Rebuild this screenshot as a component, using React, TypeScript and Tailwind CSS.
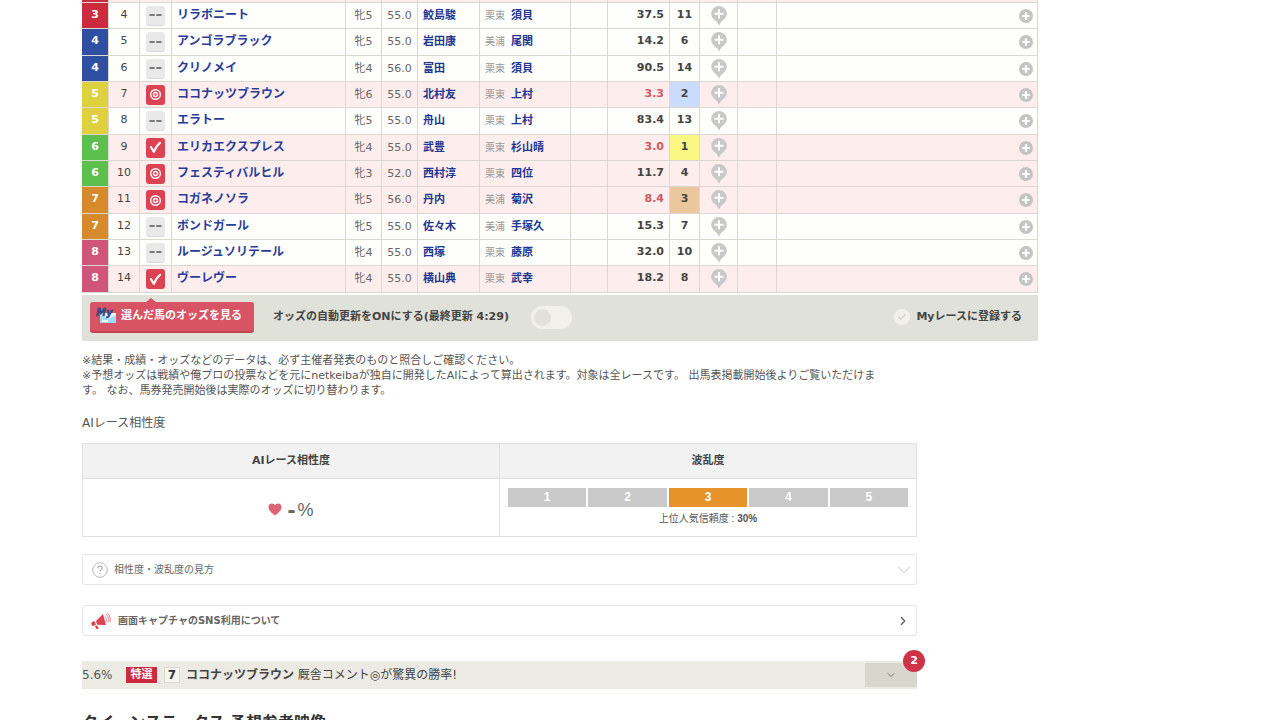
import { useState } from 'react';
import { clsx } from 'clsx';
import { Check, ChevronDown, ChevronRight } from 'lucide-react';

type Mark = 'none' | 'double' | 'check';

const frameColors: Record<number, string> = {
  3: 'bg-[#cc2a3d]',
  4: 'bg-[#2e4fa2]',
  5: 'bg-[#dfd03f]',
  6: 'bg-[#5dbf4d]',
  7: 'bg-[#d68a2b]',
  8: 'bg-[#d1547a]',
};

const rankColors: Record<number, string> = {
  1: 'bg-[#faf783]',
  2: 'bg-[#c9dcfb]',
  3: 'bg-[#eac79d]',
};

const horses: {
  frame: number;
  no: number;
  mark: Mark;
  name: string;
  age: string;
  weight: string;
  jockey: string;
  area: string;
  trainer: string;
  odds: string;
  rank: number;
}[] = [
  { frame: 3, no: 4, mark: 'none', name: 'リラボニート', age: '牝5', weight: '55.0', jockey: '鮫島駿', area: '栗東', trainer: '須貝', odds: '37.5', rank: 11 },
  { frame: 4, no: 5, mark: 'none', name: 'アンゴラブラック', age: '牝5', weight: '55.0', jockey: '岩田康', area: '美浦', trainer: '尾関', odds: '14.2', rank: 6 },
  { frame: 4, no: 6, mark: 'none', name: 'クリノメイ', age: '牝4', weight: '56.0', jockey: '富田', area: '栗東', trainer: '須貝', odds: '90.5', rank: 14 },
  { frame: 5, no: 7, mark: 'double', name: 'ココナッツブラウン', age: '牝6', weight: '55.0', jockey: '北村友', area: '栗東', trainer: '上村', odds: '3.3', rank: 2 },
  { frame: 5, no: 8, mark: 'none', name: 'エラトー', age: '牝5', weight: '55.0', jockey: '舟山', area: '栗東', trainer: '上村', odds: '83.4', rank: 13 },
  { frame: 6, no: 9, mark: 'check', name: 'エリカエクスプレス', age: '牝4', weight: '55.0', jockey: '武豊', area: '栗東', trainer: '杉山晴', odds: '3.0', rank: 1 },
  { frame: 6, no: 10, mark: 'double', name: 'フェスティバルヒル', age: '牝3', weight: '52.0', jockey: '西村淳', area: '栗東', trainer: '四位', odds: '11.7', rank: 4 },
  { frame: 7, no: 11, mark: 'double', name: 'コガネノソラ', age: '牝5', weight: '56.0', jockey: '丹内', area: '美浦', trainer: '菊沢', odds: '8.4', rank: 3 },
  { frame: 7, no: 12, mark: 'none', name: 'ボンドガール', age: '牝5', weight: '55.0', jockey: '佐々木', area: '美浦', trainer: '手塚久', odds: '15.3', rank: 7 },
  { frame: 8, no: 13, mark: 'none', name: 'ルージュソリテール', age: '牝4', weight: '55.0', jockey: '西塚', area: '栗東', trainer: '藤原', odds: '32.0', rank: 10 },
  { frame: 8, no: 14, mark: 'check', name: 'ヴーレヴー', age: '牝4', weight: '55.0', jockey: '横山典', area: '栗東', trainer: '武幸', odds: '18.2', rank: 8 },
];

const cell = 'border-r border-b border-[#dbd8d2] p-0';

function MarkButton({ mark }: { mark: Mark }) {
  return (
    <button
      aria-label="印"
      className={clsx(
        'mx-auto flex h-5 w-[19px] items-center justify-center rounded-[3px]',
        mark === 'none' ? 'border-b border-[#d8d8d8] bg-[#e9e9e9]' : 'bg-[#dc4252]'
      )}
    >
      {mark === 'none' && (
        <svg width="13" height="4" viewBox="0 0 13 4" stroke="#555" strokeWidth="1.5">
          <path d="M0.5 2H5.7M7.3 2H12.5" />
        </svg>
      )}
      {mark === 'double' && (
        <svg width="13" height="13" viewBox="0 0 13 13" fill="none" stroke="#fff" strokeWidth="1.4">
          <circle cx="6.5" cy="6.5" r="4.8" />
          <circle cx="6.5" cy="6.5" r="2" />
        </svg>
      )}
      {mark === 'check' && (
        <svg width="13" height="13" viewBox="0 0 13 13" fill="none" stroke="#fff" strokeWidth="2.2" strokeLinecap="round" strokeLinejoin="round">
          <path d="M2 6.2L4.8 10.8C6.2 7.5 8 4.5 11 1.8" />
        </svg>
      )}
    </button>
  );
}

function PinButton() {
  return (
    <button aria-label="メモ" className="mx-auto block">
      <svg width="16" height="20" viewBox="0 0 16 20">
        <path d="M8 0A7.8 7.8 0 0 0 .2 7.8C.2 11 2.2 13 4.8 15C6.3 16.3 7.3 17.8 8 19.8C8.7 17.8 9.7 16.3 11.2 15C13.8 13 15.8 11 15.8 7.8A7.8 7.8 0 0 0 8 0Z" fill="#c8c8c8" />
        <path d="M8 3.3V12.3M3.5 7.8H12.5" stroke="#fff" strokeWidth="2" />
      </svg>
    </button>
  );
}

function PlusButton() {
  return (
    <button aria-label="追加" className="mr-1 ml-auto block">
      <svg width="14" height="14" viewBox="0 0 14 14">
        <circle cx="7" cy="7" r="7" fill="#c4c4c4" />
        <path d="M7 3.3V10.7M3.3 7H10.7" stroke="#fff" strokeWidth="2.2" />
      </svg>
    </button>
  );
}

function HorseTable() {
  return (
    <table className="w-full table-fixed border-separate border-spacing-0 text-[11px] leading-[18px]">
      <colgroup>
        <col className="w-[27px]" />
        <col className="w-[31px]" />
        <col className="w-8" />
        <col className="w-[174px]" />
        <col className="w-9" />
        <col className="w-9" />
        <col className="w-[62px]" />
        <col className="w-[91px]" />
        <col className="w-[37px]" />
        <col className="w-[62px]" />
        <col className="w-[30px]" />
        <col className="w-[38px]" />
        <col className="w-[39px]" />
        <col />
      </colgroup>
      <tbody>
        <tr className="h-[3px] bg-[#fdeeed]">
          <td className={clsx(cell, frameColors[3])}></td>
          {Array.from({ length: 13 }, (_, i) => (
            <td key={i} className={cell}></td>
          ))}
        </tr>
        {horses.map((h, i) => (
          <tr
            key={h.no}
            className={clsx(i % 3 === 1 ? 'h-[27px]' : 'h-[26px]', h.mark === 'none' ? 'bg-[#fefefd]' : 'bg-[#fdeeed]')}
          >
            <td className={clsx(cell, 'pb-0.5 text-center font-bold text-white', frameColors[h.frame])}>{h.frame}</td>
            <td className={clsx(cell, 'pb-0.5 text-center text-[#444]')}>{h.no}</td>
            <td className={cell}><MarkButton mark={h.mark} /></td>
            <td className={clsx(cell, 'pb-0.5 pl-[5px] text-xs leading-[18px]')}>
              <a href="#" className="font-bold text-[#2a3c98]">{h.name}</a>
            </td>
            <td className={clsx(cell, 'text-center text-[#666]')}>{h.age}</td>
            <td className={clsx(cell, 'text-center text-[#666]')}>{h.weight}</td>
            <td className={clsx(cell, 'pl-[5px]')}>
              <a href="#" className="font-bold text-[#22358f]">{h.jockey}</a>
            </td>
            <td className={clsx(cell, 'pl-[5px]')}>
              <span className="mr-1.5 text-[10px] text-[#999]">{h.area}</span>
              <a href="#" className="font-bold text-[#22358f]">{h.trainer}</a>
            </td>
            <td className={cell}></td>
            <td className={clsx(cell, 'pr-[5px] pb-0.5 text-right font-bold', Number(h.odds) < 10 ? 'text-[#cf5567]' : 'text-[#444]')}>
              {h.odds}
            </td>
            <td className={clsx(cell, 'pb-0.5 text-center font-bold text-[#444]', rankColors[h.rank])}>{h.rank}</td>
            <td className={cell}><PinButton /></td>
            <td className={cell}></td>
            <td className={cell}><PlusButton /></td>
          </tr>
        ))}
      </tbody>
    </table>
  );
}

function OddsBar() {
  const [auto, setAuto] = useState(false);

  return (
    <div className="mt-0.5 flex h-[46px] items-center bg-[#e0e1d8] px-2 pb-0.5 text-[11px] font-bold text-[#444]">
      <button className="relative flex h-[31px] w-[164px] items-center gap-1 rounded-[3px] border-b-2 border-[#c24552] bg-[#d85364] pl-1.5 whitespace-nowrap text-white">
        <span className="absolute -top-1 left-14 border-x-5 border-b-4 border-x-transparent border-b-[#d85364]"></span>
        <svg width="21" height="18" viewBox="0 0 21 18">
          <path d="M4 6H20V16H4Z" fill="#eefaff" />
          <path d="M4 8L12 12L20 8V16H4Z" fill="#9edcf0" />
          <path d="M6 14H12" stroke="#fff" strokeWidth="1.5" />
          <text x="0" y="9" fontSize="10" fontWeight="bold" fontStyle="italic" fill="#31559b" stroke="#263a70" strokeWidth="0.4">My</text>
        </svg>
        選んだ馬のオッズを見る
      </button>
      <label htmlFor="auto-odds" className="ml-[19px] whitespace-nowrap">オッズの自動更新をONにする(最終更新 4:29)</label>
      <input
        id="auto-odds"
        type="checkbox"
        role="switch"
        checked={auto}
        onChange={() => setAuto(!auto)}
        className="ml-[22px] h-[23px] w-[41px] shrink-0 appearance-none rounded-full bg-[#f1f1ea] p-[3px] before:block before:size-[17px] before:rounded-full before:bg-[#e0e1d8] checked:bg-[#d85364] checked:before:ml-auto"
      />
      <button className="mr-2 ml-auto flex items-center gap-1.5 whitespace-nowrap">
        <span className="flex size-4 items-center justify-center rounded-full bg-[#f1f1ea] text-[#cfcfc6]">
          <Check size={10} strokeWidth={3} />
        </span>
        Myレースに登録する
      </button>
    </div>
  );
}

function Compatibility() {
  return (
    <table className="mt-[11px] w-full table-fixed border-collapse text-[#444]">
      <thead>
        <tr className="h-[35px] bg-[#f2f2f2] text-[11px]">
          <th className="border border-[#e0e0e0]">AIレース相性度</th>
          <th className="border border-[#e0e0e0]">波乱度</th>
        </tr>
      </thead>
      <tbody>
        <tr className="h-[58px]">
          <td className="border border-[#e0e0e0] pt-1">
            <div className="flex items-center justify-center gap-[5px]">
              <svg width="14" height="13" viewBox="0 0 14 13" fill="#de6373">
                <path d="M7 12.5C4.5 10.5.5 7.8.5 4.2C.5 2 2 .6 3.9.6C5.3.6 6.4 1.3 7 2.4C7.6 1.3 8.7.6 10.1.6C12 .6 13.5 2 13.5 4.2C13.5 7.8 9.5 10.5 7 12.5Z" />
              </svg>
              <span className="flex items-center gap-0.5 font-['Liberation_Sans',sans-serif] text-lg leading-5 text-[#666]">
                <b className="text-2xl leading-5">-</b>%
              </span>
            </div>
          </td>
          <td className="border border-[#e0e0e0] px-2 py-0 font-['Liberation_Sans','Noto_Sans_CJK_JP',sans-serif]">
            <ol className="flex gap-0.5 text-center text-xs leading-[19px] font-bold text-white">
              {[1, 2, 3, 4, 5].map((n) => (
                <li key={n} className={clsx('flex-1', n === 3 ? 'bg-[#e6932b]' : 'bg-[#c9c9c9]')}>{n}</li>
              ))}
            </ol>
            <p className="mt-1 text-center text-[10px] leading-4 text-[#555]">
              上位人気信頼度 : <b>30%</b>
            </p>
          </td>
        </tr>
      </tbody>
    </table>
  );
}

function Megaphone() {
  return (
    <svg width="20" height="18" viewBox="0 0 20 18">
      <path d="M5 9L12 2L15 13L6.2 12.8Z" fill="#dc4250" />
      <path d="M3.8 9.2L1.4 9.8C.3 10.1.2 11.3.5 12.4C.8 13.5 1.6 14 2.6 13.7L4.9 13.1Z" fill="#dc4250" />
      <path d="M4 14L6.3 13.5L7.8 16.5L5.5 17.3Z" fill="#dc4250" />
      <path d="M14 4.5C15.5 6.5 16 8.5 15.8 10.5M15 2C17.4 4.5 18.2 7.5 17.8 10.5M16.5.8C19 3.5 19.8 6.8 19.2 10" fill="none" stroke="#e58a93" strokeWidth="1" />
    </svg>
  );
}

function Ticker() {
  return (
    <div className="relative mt-[25px] flex h-7 items-center bg-[#ebebe4] text-xs whitespace-nowrap text-[#555]">
      <span className="w-11">5.6%</span>
      <span className="flex h-4 w-[31px] items-center justify-center bg-[#cc2a3d] text-[11px] font-bold text-white">特選</span>
      <span className="ml-[7px] flex size-4 items-center justify-center border border-[#d8d8cc] bg-[#f6f6f0] font-bold text-[#333]">7</span>
      <a href="#" className="ml-1.5 text-[#444]">
        <b>ココナッツブラウン</b> 厩舎コメント◎が驚異の勝率!
      </a>
      <button aria-label="開く" className="ml-auto flex h-6 w-[52px] items-center justify-center bg-[#d7d7ce] text-[#777]">
        <ChevronDown size={12} />
      </button>
      <span className="absolute -top-[11px] -right-2 flex size-[22px] items-center justify-center rounded-full bg-[#cf3348] text-[11px] font-bold text-white">2</span>
    </div>
  );
}

export default function App() {
  return (
    <main
      lang="ja"
      className="h-screen overflow-hidden bg-white pr-4 pl-[82px] font-['DejaVu_Sans','Noto_Sans_CJK_JP',sans-serif] text-[#555]"
    >
      <section className="max-w-[956px]">
        <HorseTable />
        <OddsBar />
      </section>

      <section className="max-w-[835px]">
        <div className="mt-3 pr-8 text-[11px] leading-[15px]">
          <p>※結果・成績・オッズなどのデータは、必ず主催者発表のものと照合しご確認ください。</p>
          <p>※予想オッズは戦績や俺プロの投票などを元にnetkeibaが独自に開発したAIによって算出されます。対象は全レースです。 出馬表掲載開始後よりご覧いただけます。 なお、馬券発売開始後は実際のオッズに切り替わります。</p>
        </div>

        <h2 className="mt-4 text-xs leading-[18px]">AIレース相性度</h2>
        <Compatibility />

        <button className="mt-[17px] flex h-[31px] w-full items-center rounded-[3px] border border-[#e5e5e5] pr-1.5 pl-[9px] text-[10px] text-[#666]">
          <svg width="16" height="16" viewBox="0 0 16 16" fill="none" stroke="#aaa">
            <circle cx="8" cy="8" r="7.3" stroke="#bbb" />
            <path d="M5.8 6.3C5.8 4.9 6.7 4.1 8 4.1C9.3 4.1 10.2 4.9 10.2 6.1C10.2 7.6 8 7.7 8 9.6M8 11V12.2" strokeWidth="1.1" />
          </svg>
          <span className="ml-1.5">相性度・波乱度の見方</span>
          <svg width="12" height="8" viewBox="0 0 12 8" fill="none" stroke="#ccc" className="ml-auto">
            <path d="M.5 1L6 6.8L11.5 1" />
          </svg>
        </button>

        <a href="#" className="mt-5 flex h-[31px] w-full items-center rounded-[3px] border border-[#e5e5e5] pr-1.5 pl-2 text-[10px] font-bold text-[#666]">
          <Megaphone />
          <span className="ml-[7px]">画面キャプチャのSNS利用について</span>
          <ChevronRight size={14} className="ml-auto text-[#555]" />
        </a>

        <Ticker />

        <h2 className="mt-6 text-base leading-5 font-bold text-[#333]">クイーンステークス 予想参考映像</h2>
      </section>
    </main>
  );
}
